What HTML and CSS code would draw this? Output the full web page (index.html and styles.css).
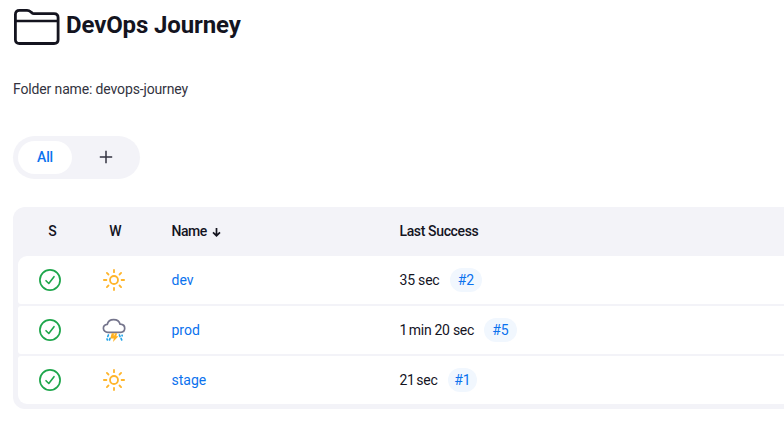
FILE: index.html
```html
<!DOCTYPE html>
<html lang="en">
<head>
<meta charset="utf-8">
<title>DevOps Journey</title>
<link rel="stylesheet" href="styles.css">
</head>
<body>
<svg class="sprite" aria-hidden="true">
  <symbol id="success" viewBox="0 0 24 24">
    <circle cx="12" cy="12" r="10.1" fill="none" stroke="#1ea64b" stroke-width="1.7"/>
    <path d="M8 12.7l2.8 2.8L16 8.7" fill="none" stroke="#1ea64b" stroke-width="1.6" stroke-linecap="round" stroke-linejoin="round"/>
  </symbol>
  <symbol id="sunny" viewBox="0 0 24 24">
    <g fill="none" stroke="#ffb52a" stroke-width="1.8">
      <circle cx="12" cy="12" r="4"/>
      <path stroke-linecap="round" d="M12 1.9v2.3M12 19.8v2.3M1.9 12h2.5M19.6 12h2.5M4.9 4.9l1.6 1.6M17.5 17.5l1.6 1.6M19.1 4.9l-1.6 1.6M6.5 17.5l-1.6 1.6"/>
    </g>
  </symbol>
  <symbol id="storm" viewBox="0 0 24 24">
    <path d="M6 14.3C3.3 14.3 1.4 12.7 1.4 10.3C1.4 8.1 2.9 6.5 5.3 6.3C6 3.2 8.6 1.6 11.7 1.6C15 1.6 17.4 3.5 18.1 6.2C20.8 6.3 22.7 7.9 22.7 10.3C22.7 12.7 21 14.3 18.5 14.3Z" fill="#fff" stroke="#75758c" stroke-width="1.7"/>
    <path d="M6.4 17l-.6 1.5M5 21l.4.9M8.1 20.3l-.6 1.6M17.4 17l.6 1.5M20 17.2l.2.6M19.1 20.5l.6 1.4" fill="none" stroke="#27a5e8" stroke-width="1.7" stroke-linecap="round"/>
    <path d="M9.7 15.2h5.4l-.8 3h2.1L11 24l.8-3.5H8.3Z" fill="#ffb01f"/>
    <path d="M12.1 15.7h.7l-.5 1.7h-.7Z" fill="#fff"/>
  </symbol>
</svg>
<header class="heading">
  <svg class="folder" viewBox="0 0 48 40" fill="none" stroke="#14141f" stroke-width="2.8">
    <path d="M2.4 32V6.5Q2.4 2.4 6.5 2.4H14Q16.2 2.4 17.6 3.7L19 4.9Q19.7 5.6 21 5.6H41Q45.1 5.6 45.1 9.7V31.8Q45.1 35.5 41 35.5H6.5Q2.4 35.5 2.4 31.8Z"/>
    <path d="M3 13h41.5" stroke-width="2.3"/>
  </svg>
  <h1>DevOps Journey</h1>
</header>
<p class="folder-name">Folder name: devops-journey</p>
<nav class="tabs">
  <a class="tab">All</a>
  <a class="add" aria-label="New view"><svg viewBox="0 0 14 14"><path d="M7 .8v12.4M.8 7h12.4"/></svg></a>
</nav>
<main class="jobs">
  <div class="row head">
    <span class="status">S</span><span class="weather">W</span>
    <span class="by-name">Name<svg class="sort" viewBox="0 0 10 10"><path d="M4.5 1v7.5M1 5.3l3.5 3.4L8 5.3"/></svg></span>
    <span class="by-success">Last Success</span>
  </div>
  <div class="row item">
    <svg class="icon"><use href="#success"/></svg><svg class="icon"><use href="#sunny"/></svg>
    <a class="name">dev</a><div class="last"><span class="time">35 sec</span><a class="build">#2</a></div>
  </div>
  <div class="row item">
    <svg class="icon"><use href="#success"/></svg><svg class="icon"><use href="#storm"/></svg>
    <a class="name">prod</a><div class="last"><span class="time t-prod"><span class="one">1</span> min 20 sec</span><a class="build wide">#5</a></div>
  </div>
  <div class="row item">
    <svg class="icon"><use href="#success"/></svg><svg class="icon"><use href="#sunny"/></svg>
    <a class="name">stage</a><div class="last"><span class="time t-stage">2<span class="one">1</span> sec</span><a class="build narrow">#1</a></div>
  </div>
</main>
</body>
</html>
```
FILE: styles.css
```css
* { box-sizing: border-box; }
body {
  margin: 0;
  padding: 8px 0 0 13px;
  height: 426px;
  overflow: hidden;
  background: #fff;
  color: #14141f;
  font: 14px/20px Roboto, sans-serif;
}
.sprite { position: absolute; width: 0; height: 0; }
.heading { display: flex; align-items: center; gap: 5px; height: 39px; }
.folder { width: 48px; height: 40px; flex: none; }
h1 { margin: 0; padding-bottom: 6px; font-size: 24px; line-height: 32px; font-weight: 700; letter-spacing: -.13px; }
.folder-name { margin: 32px 0 0; color: #333340; letter-spacing: -.14px; }
.tabs { display: flex; width: 127px; height: 43px; margin-top: 37px; padding: 5px; border-radius: 22px; background: #f3f3f8; }
.tab { width: 54px; border-radius: 17px; background: #fff; color: #0b72ee; text-align: center; line-height: 33px; font-weight: 500; letter-spacing: -.2px; }
.add { display: flex; flex: 1; align-items: center; justify-content: center; padding-left: 5px; }
.add svg { width: 14px; height: 14px; margin-top: -1px; stroke: #333340; stroke-width: 1.5; }
.jobs { margin-top: 28px; padding: 0 0 5px 5px; height: 202px; border-radius: 12px 0 0 12px; background: #f3f3f8; }
.row { display: grid; grid-template-columns: 64px 64px 228px 1fr; align-items: center; padding-left: 25.5px; }
.head { height: 49px; padding-bottom: 2px; font-weight: 500; }
.status, .weather { width: 20px; margin-left: -1px; text-align: center; }
.weather { margin-left: -2px; }
.by-name { letter-spacing: -.5px; }
.by-success { letter-spacing: -.37px; }
.item { height: 48px; margin-bottom: 2px; border-radius: 3px 0 0 3px; background: #fff; }
.item:nth-child(2) { border-top-left-radius: 9px; }
.item:last-child { border-bottom-left-radius: 9px; margin-bottom: 0; }
.icon { width: 24px; height: 24px; margin-left: -5.5px; }
.sort { width: 10px; height: 10px; margin-left: 5px; vertical-align: -1px; fill: none; stroke: #14141f; stroke-width: 1.7; }
.name { color: #0b72ee; }
.last { display: flex; align-items: center; }
.build { width: 32px; height: 24px; border-radius: 12px; background: #f1f7fe; color: #0b72ee; text-align: center; line-height: 24px; }
.time { width: 50.5px; white-space: nowrap; letter-spacing: -.2px; }
.t-prod { width: 84.5px; letter-spacing: -.28px; }
.t-stage { width: 48.5px; letter-spacing: -.3px; }
.one { letter-spacing: -1.8px; }
.wide { width: 33px; }
.narrow { width: 29px; }
```
